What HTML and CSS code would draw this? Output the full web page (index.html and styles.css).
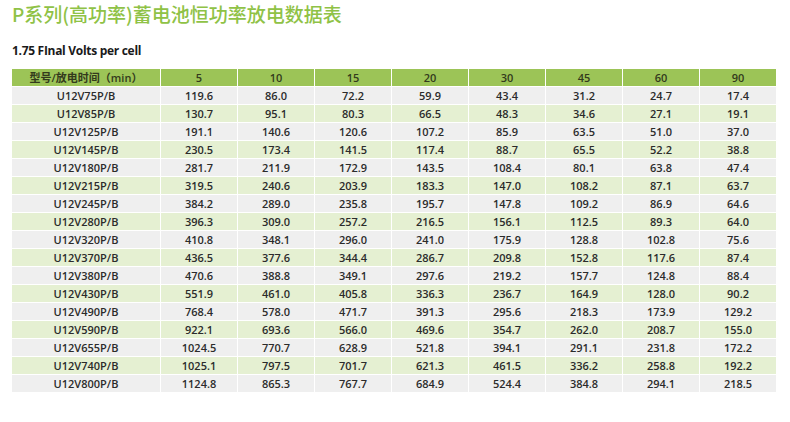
FILE: index.html
```html
<!DOCTYPE html>
<html lang="zh-CN">
<head>
<meta charset="utf-8">
<title>P系列(高功率)蓄电池恒功率放电数据表</title>
<link rel="stylesheet" href="styles.css">
</head>
<body>
<div class="page">
  <h1 class="title">P系列(高功率)蓄电池恒功率放电数据表</h1>
  <h2 class="subtitle">1.75 FInal Volts per cell</h2>
  <table class="data">
    <colgroup><col class="c-model"><col><col><col><col><col><col><col><col></colgroup>
    <thead>
      <tr><th>型号/放电时间（min）</th><th>5</th><th>10</th><th>15</th><th>20</th><th>30</th><th>45</th><th>60</th><th>90</th></tr>
    </thead>
    <tbody>
      <tr><td>U12V75P/B</td><td>119.6</td><td>86.0</td><td>72.2</td><td>59.9</td><td>43.4</td><td>31.2</td><td>24.7</td><td>17.4</td></tr>
      <tr><td>U12V85P/B</td><td>130.7</td><td>95.1</td><td>80.3</td><td>66.5</td><td>48.3</td><td>34.6</td><td>27.1</td><td>19.1</td></tr>
      <tr><td>U12V125P/B</td><td>191.1</td><td>140.6</td><td>120.6</td><td>107.2</td><td>85.9</td><td>63.5</td><td>51.0</td><td>37.0</td></tr>
      <tr><td>U12V145P/B</td><td>230.5</td><td>173.4</td><td>141.5</td><td>117.4</td><td>88.7</td><td>65.5</td><td>52.2</td><td>38.8</td></tr>
      <tr><td>U12V180P/B</td><td>281.7</td><td>211.9</td><td>172.9</td><td>143.5</td><td>108.4</td><td>80.1</td><td>63.8</td><td>47.4</td></tr>
      <tr><td>U12V215P/B</td><td>319.5</td><td>240.6</td><td>203.9</td><td>183.3</td><td>147.0</td><td>108.2</td><td>87.1</td><td>63.7</td></tr>
      <tr><td>U12V245P/B</td><td>384.2</td><td>289.0</td><td>235.8</td><td>195.7</td><td>147.8</td><td>109.2</td><td>86.9</td><td>64.6</td></tr>
      <tr><td>U12V280P/B</td><td>396.3</td><td>309.0</td><td>257.2</td><td>216.5</td><td>156.1</td><td>112.5</td><td>89.3</td><td>64.0</td></tr>
      <tr><td>U12V320P/B</td><td>410.8</td><td>348.1</td><td>296.0</td><td>241.0</td><td>175.9</td><td>128.8</td><td>102.8</td><td>75.6</td></tr>
      <tr><td>U12V370P/B</td><td>436.5</td><td>377.6</td><td>344.4</td><td>286.7</td><td>209.8</td><td>152.8</td><td>117.6</td><td>87.4</td></tr>
      <tr><td>U12V380P/B</td><td>470.6</td><td>388.8</td><td>349.1</td><td>297.6</td><td>219.2</td><td>157.7</td><td>124.8</td><td>88.4</td></tr>
      <tr><td>U12V430P/B</td><td>551.9</td><td>461.0</td><td>405.8</td><td>336.3</td><td>236.7</td><td>164.9</td><td>128.0</td><td>90.2</td></tr>
      <tr><td>U12V490P/B</td><td>768.4</td><td>578.0</td><td>471.7</td><td>391.3</td><td>295.6</td><td>218.3</td><td>173.9</td><td>129.2</td></tr>
      <tr><td>U12V590P/B</td><td>922.1</td><td>693.6</td><td>566.0</td><td>469.6</td><td>354.7</td><td>262.0</td><td>208.7</td><td>155.0</td></tr>
      <tr><td>U12V655P/B</td><td>1024.5</td><td>770.7</td><td>628.9</td><td>521.8</td><td>394.1</td><td>291.1</td><td>231.8</td><td>172.2</td></tr>
      <tr><td>U12V740P/B</td><td>1025.1</td><td>797.5</td><td>701.7</td><td>621.3</td><td>461.5</td><td>336.2</td><td>258.8</td><td>192.2</td></tr>
      <tr><td>U12V800P/B</td><td>1124.8</td><td>865.3</td><td>767.7</td><td>684.9</td><td>524.4</td><td>384.8</td><td>294.1</td><td>218.5</td></tr>
    </tbody>
  </table>
</div>
</body>
</html>
```
FILE: styles.css
```css
html, body {
  margin: 0;
  padding: 0;
  background: #ffffff;
}
.page {
  padding: 3px 0 0 11px;
  font-family: "Open Sans", "Noto Sans CJK SC", sans-serif;
  color: #2b2b2b;
}
.title {
  margin: 0 0 0 1px;
  font-family: "Noto Sans CJK SC", sans-serif;
  font-size: 19px;
  line-height: 22px;
  font-weight: 500;
  color: #8fc246;
}
.subtitle {
  margin: 18px 0 0 1px;
  font-size: 12px;
  line-height: 16px;
  font-weight: 700;
  letter-spacing: -0.3px;
  color: #1a1a1a;
}
.data {
  margin-top: 9px;
  border-collapse: collapse;
  table-layout: fixed;
  width: 765px;
  font-size: 11px;
}
.data col { width: 77px; }
.data col.c-model { width: 149px; }
.data th, .data td {
  border: 1px solid #ffffff;
  padding: 0;
  height: 17px;
  line-height: 17px;
  text-align: center;
  white-space: nowrap;
}
.data th {
  background: #9cc457;
  color: #333a1c;
  font-weight: 600;
  font-family: "Open Sans", "Noto Sans CJK SC", sans-serif;
}
.data tbody tr:nth-child(odd) td { background: #efefef; }
.data tbody tr:nth-child(even) td { background: #e5f0d2; }
.data td { font-weight: 600; }
```
